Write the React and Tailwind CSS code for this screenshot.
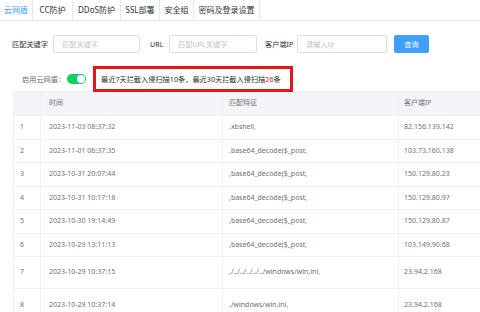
import React from "react";

const tabs = [
  { label: "云网盾", w: "w-[33px]", active: true },
  { label: "CC防护", w: "w-[40px]" },
  { label: "DDoS防护", w: "w-[48px]" },
  { label: "SSL部署", w: "w-[39px]" },
  { label: "安全组", w: "w-[34px]" },
  { label: "密码及登录设置", w: "w-[66px]" },
];

const rows = [
  ["1", "2023-11-03 08:37:32", ",xbshell,", "82.156.139.142", "h-[23.5px]"],
  ["2", "2023-11-01 06:37:35", ",base64_decode($_post,", "103.73.160.138", "h-[23.5px]"],
  ["3", "2023-10-31 20:07:44", ",base64_decode($_post,", "150.129.80.23", "h-[23.5px]"],
  ["4", "2023-10-31 10:17:18", ",base64_decode($_post,", "150.129.80.97", "h-[23.5px]"],
  ["5", "2023-10-30 19:14:49", ",base64_decode($_post,", "150.129.80.87", "h-[23.5px]"],
  ["6", "2023-10-29 13:11:13", ",base64_decode($_post,", "103.149.90.68", "h-[23.5px]"],
  ["7", "2023-10-29 10:37:15", ",/../../../../../windows/win.ini,", "23.94.2.168", "h-[32px]"],
  ["8", "2023-10-29 10:37:14", ",/windows/win.ini,", "23.94.2.168", "h-[34px]"],
];

function Cell({ children, className = "" }) {
  return (
    <div className={`flex items-center border-r border-b border-[#eef0f4] whitespace-nowrap ${className}`}>
      {children}
    </div>
  );
}

export default function App() {
  return (
    <div className="w-[480px] h-[312px] overflow-hidden bg-white text-[7.2px] text-[#606266] font-['Noto_Sans','Noto_Sans_CJK_SC',sans-serif]">
      {/* tabs */}
      <div className="flex h-[21px] border-b border-[#e4e7ed]">
        {tabs.map((t) => (
          <div
            key={t.label}
            className={`${t.w} flex items-center justify-center border-r border-[#e4e7ed] text-[8px] ${
              t.active ? "text-[#409eff] bg-white" : "text-[#303133]"
            }`}
          >
            {t.label}
          </div>
        ))}
      </div>

      {/* search */}
      <div className="flex items-center mt-[14px] pl-[12px] h-[18px]">
        <span className="w-[41px] text-[#303133]">匹配关键字</span>
        <div className="w-[87px] h-[18px] border border-[#dcdfe6] rounded-[2px] flex items-center pl-[8px] text-[#c0c4cc]">
          匹配关键字
        </div>
        <span className="ml-[10px] w-[19px] text-[#303133]">URL</span>
        <div className="w-[88px] h-[18px] border border-[#dcdfe6] rounded-[2px] flex items-center pl-[8px] text-[#c0c4cc]">
          匹配URL关键字
        </div>
        <span className="ml-[8px] w-[32px] text-[#303133]">客户端IP</span>
        <div className="w-[90px] h-[18px] border border-[#dcdfe6] rounded-[2px] flex items-center pl-[8px] text-[#c0c4cc]">
          请输入Ip
        </div>
        <button className="ml-[7px] w-[35px] h-[18px] rounded-[2px] bg-[#409eff] text-white flex items-center justify-center">
          查询
        </button>
      </div>

      {/* status */}
      <div className="flex items-center mt-[13px] h-[26px] pl-[22px]">
        <span className="w-[45px] text-[#707070]">启用云网盾：</span>
        <div className="w-[19px] h-[10px] rounded-full bg-[#13ce66] flex items-center justify-end pr-[1px]">
          <div className="w-[8px] h-[8px] rounded-full bg-white" />
        </div>
        <div className="ml-[7px] w-[200px] h-[26px] border-[3px] border-[#e0161b] flex items-center pl-[5px] text-[#303133] relative z-10">
          最近7天拦截入侵扫描10条，最近30天拦截入侵扫描<span className="text-[#e0161b]">26</span>条
        </div>
      </div>

      {/* table */}
      <div className="ml-[13px] -mt-[1px] w-[520px] border-l border-t border-[#eef0f4] grid grid-cols-[27px_182px_176px_135px] text-[7px] text-[#707070]">
        <Cell className="h-[24px] bg-[#f3f5f9]" />
        <Cell className="h-[24px] bg-[#f3f5f9] pl-[8px]">时间</Cell>
        <Cell className="h-[24px] bg-[#f3f5f9] pl-[6px]">匹配特征</Cell>
        <Cell className="h-[24px] bg-[#f3f5f9] pl-[5px]">客户端IP</Cell>
        {rows.map(([n, time, feat, ip, h]) => (
          <React.Fragment key={n}>
            <Cell className={`${h} pl-[6px]`}>{n}</Cell>
            <Cell className={`${h} pl-[8px]`}>{time}</Cell>
            <Cell className={`${h} pl-[6px]`}>{feat}</Cell>
            <Cell className={`${h} pl-[5px]`}>{ip}</Cell>
          </React.Fragment>
        ))}
      </div>
    </div>
  );
}
